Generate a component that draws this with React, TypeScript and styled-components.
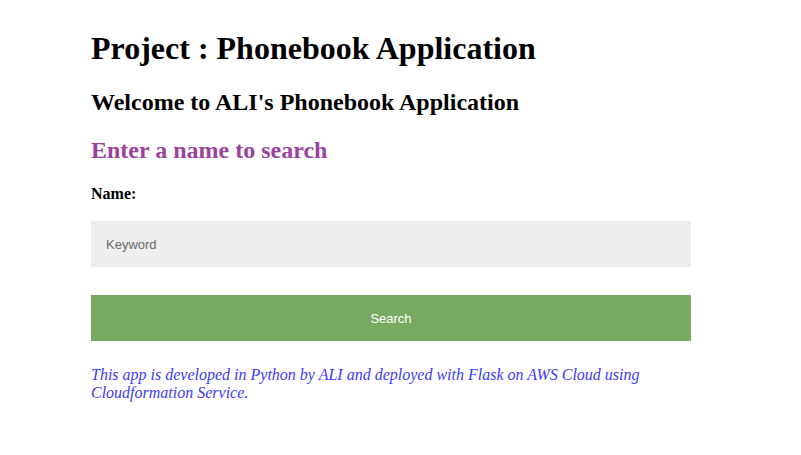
import styled, { createGlobalStyle } from "styled-components";

const GlobalStyle = createGlobalStyle`
  body {
    margin: 8px;
    font-family: "Liberation Serif", "Times New Roman", serif;
    background: #ffffff;
    color: #000000;
  }
`;

const Page = styled.div`
  width: 600px;
  padding-left: 83px;
`;

const Title = styled.h1`
  font-size: 32px;
  margin: 22px 0 22px;
`;

const Welcome = styled.h2`
  font-size: 24px;
  margin: 22px 0 20px;
`;

const Prompt = styled.h2`
  font-size: 24px;
  margin: 21px 0 21px;
  color: #9c429e;
`;

const SearchForm = styled.form`
  display: flex;
  flex-direction: column;
`;

const Label = styled.label`
  font-weight: bold;
  font-size: 16px;
  margin-bottom: 18px;
`;

const Field = styled.input`
  box-sizing: border-box;
  width: 100%;
  height: 46px;
  border: none;
  outline: none;
  background: #eeeeee;
  padding: 0 15px;
  font-family: "Liberation Sans", Arial, sans-serif;
  font-size: 13px;
  margin-bottom: 28px;

  &::placeholder {
    color: #6b6b6b;
  }
`;

const SubmitButton = styled.button`
  width: 100%;
  height: 46px;
  border: none;
  background: #7aa961;
  color: #ffffff;
  font-family: "Liberation Sans", Arial, sans-serif;
  font-size: 13px;
  cursor: pointer;
`;

const Footer = styled.p`
  font-style: italic;
  font-size: 16px;
  line-height: 18px;
  color: #3d3af7;
  margin: 25px 0 0;
`;

const App = () => {
  return (
    <>
      <GlobalStyle />
      <Page>
        <Title>Project : Phonebook Application</Title>
        <Welcome>Welcome to ALI's Phonebook Application</Welcome>
        <Prompt>Enter a name to search</Prompt>
        <SearchForm onSubmit={(e) => e.preventDefault()}>
          <Label htmlFor="keyword">Name:</Label>
          <Field id="keyword" name="keyword" placeholder="Keyword" />
          <SubmitButton type="submit">Search</SubmitButton>
        </SearchForm>
        <Footer>
          This app is developed in Python by ALI and deployed with Flask on AWS Cloud using
          Cloudformation Service.
        </Footer>
      </Page>
    </>
  );
};

export default App;
